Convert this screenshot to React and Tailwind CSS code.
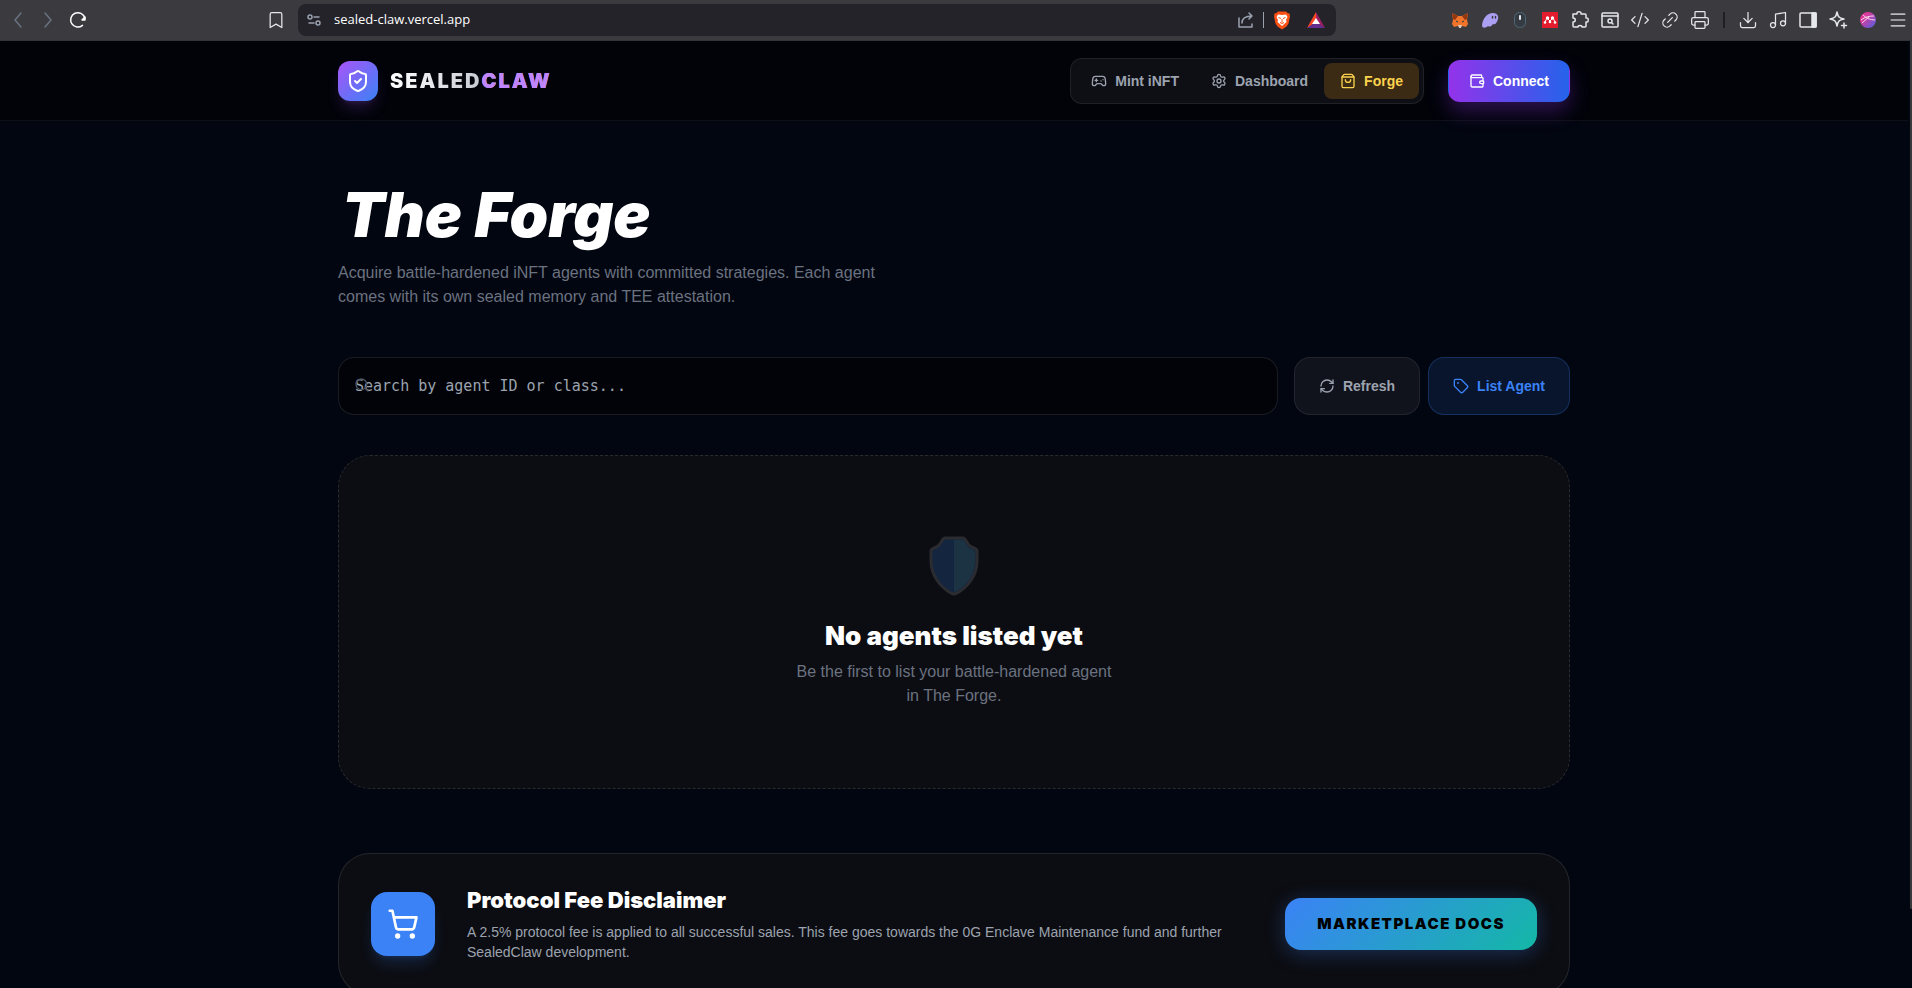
import React, { useState } from "react";
import {
  ShieldCheck,
  Gamepad2,
  Settings,
  ShoppingBag,
  Wallet,
  RefreshCw,
  Tag,
  Search,
  ShoppingCart,
  Bookmark,
  Link2,
  CodeXml,
  Printer,
  Download,
  Music,
  Menu,
} from "lucide-react";

export default function App() {
  const [query, setQuery] = useState("");

  return (
    <div className="h-screen flex flex-col overflow-hidden bg-[#020610] font-['Liberation_Sans',Arial,sans-serif]">
      <BrowserBar />

      <div className="flex flex-1 min-h-0">
        <div className="flex-1 overflow-y-auto [scrollbar-width:none]">
          <Header />

          <main className="max-w-7xl mx-auto px-6 pt-16 pb-10">
            {/* ================= TITLE ================= */}
            <h1 className="px-1 text-[62px] leading-[60px] font-black italic text-white mb-4 font-['Inter',sans-serif]">
              The Forge
            </h1>
            <p className="max-w-xl text-base text-[#6b7280] mb-12">
              Acquire battle-hardened iNFT agents with committed strategies. Each agent comes with its own sealed memory and TEE attestation.
            </p>

            {/* ================= SEARCH ================= */}
            <div className="flex gap-4 mb-10">
              <div className="relative flex-1">
                <Search size={16} className="absolute left-4 top-5 text-[#4b5563]" />
                <input
                  aria-label="Search agents"
                  value={query}
                  onChange={(e) => setQuery(e.target.value)}
                  placeholder="Search by agent ID or class..."
                  className="w-full h-[58px] px-4 rounded-2xl bg-black/50 border border-white/10 text-[15px] text-white placeholder:text-[#9ca3af] font-['DejaVu_Sans_Mono',monospace] outline-none"
                />
              </div>
              <div className="flex gap-2">
                <button className="flex items-center gap-2 px-6 rounded-2xl bg-[#10131c] border border-white/8 text-sm font-bold text-[#9ca3af]">
                  <RefreshCw size={16} /> Refresh
                </button>
                <button className="flex items-center gap-2 px-6 rounded-2xl bg-[#3b82f6]/12 border border-[#3b82f6]/25 text-sm font-bold text-[#3b82f6]">
                  <Tag size={16} /> List Agent
                </button>
              </div>
            </div>

            {/* ================= EMPTY STATE ================= */}
            <section className="flex flex-col items-center py-20 mb-16 rounded-[32px] bg-[#0c0d12] border border-dashed border-white/12 text-center">
              <ShieldArt />
              <h2 className="text-[26px] leading-8 font-black text-white mb-2 font-['Inter',sans-serif]">No agents listed yet</h2>
              <p className="max-w-xs text-base text-[#6b7280]">
                Be the first to list your battle-hardened agent in The Forge.
              </p>
            </section>

            {/* ================= DISCLAIMER ================= */}
            <section className="flex items-center gap-8 p-8 rounded-[32px] bg-[#0c0d12] border border-white/10">
              <div className="w-16 h-16 shrink-0 rounded-2xl bg-[#3b82f6] text-white flex items-center justify-center shadow-lg shadow-[#3b82f6]/20">
                <ShoppingCart size={32} />
              </div>
              <div className="flex-1">
                <h3 className="text-[22px] leading-7 font-black text-white mb-2 font-['Inter',sans-serif]">Protocol Fee Disclaimer</h3>
                <p className="max-w-3xl text-sm text-[#9ca3af]">
                  A 2.5% protocol fee is applied to all successful sales. This fee goes towards the 0G Enclave Maintenance fund and further SealedClaw development.
                </p>
              </div>
              <button className="px-8 h-13 rounded-2xl bg-linear-135/srgb from-[#3b82f6] to-[#14b8a6] text-[15px] font-black tracking-widest text-black shadow-[0_4px_20px] shadow-[#3b82f6]/30 font-['Inter',sans-serif]">
                MARKETPLACE DOCS
              </button>
            </section>
          </main>
        </div>

        {/* scrollbar */}
        <div className="w-1 pl-0.5">
          <div className="h-11/12 rounded-b bg-[#3a3a3c]" />
        </div>
      </div>
    </div>
  );
}

/* ================= BROWSER BAR ================= */

const BrowserBar = () => (
  <div className="h-[41px] shrink-0 flex items-center bg-[#3b3a3f] border-b border-[#343338] text-gray-200">
    <div className="w-[298px] flex items-center gap-[10px] pl-2">
      <button aria-label="Back" className="text-gray-500"><BackIcon /></button>
      <button aria-label="Forward" className="text-gray-500"><ForwardIcon /></button>
      <button aria-label="Reload"><ReloadIcon /></button>
      <button aria-label="Bookmark" className="ml-auto mr-3"><Bookmark size={20} strokeWidth={1.5} /></button>
    </div>

    <div className="w-[1038px] h-8 flex items-center gap-3 px-2 rounded-lg bg-[#242329]">
      <button aria-label="Site settings" className="text-gray-400"><TuneIcon /></button>
      <span className="flex-1 text-[13px] text-white font-['Open_Sans',sans-serif]">sealed-claw.vercel.app</span>
      <div className="flex items-center gap-2 mr-0.5">
        <button aria-label="Share" className="text-gray-400"><ShareIcon /></button>
        <span className="w-px h-4 bg-gray-400" />
        <button aria-label="Shields"><LionIcon /></button>
      </div>
      <button aria-label="Rewards" className="mr-0.5"><TriangleIcon /></button>
    </div>

    <div className="flex-1 flex items-center justify-end gap-[10px] pr-1">
      <button aria-label="Fox wallet"><FoxIcon /></button>
      <button aria-label="Ghost wallet"><GhostIcon /></button>
      <button aria-label="Mouse"><MouseIcon /></button>
      <button aria-label="Reference manager"><RedIcon /></button>
      <button aria-label="Extensions"><PuzzleIcon /></button>
      <button aria-label="Page search"><PageSearchIcon /></button>
      <button aria-label="Source"><CodeXml size={20} strokeWidth={1.5} /></button>
      <button aria-label="Copy link"><Link2 size={20} strokeWidth={1.5} className="-rotate-45" /></button>
      <button aria-label="Print"><Printer size={20} strokeWidth={1.5} /></button>
      <span className="w-0.5 h-4 mx-[3px] bg-[#1f1e23]" />
      <button aria-label="Downloads"><Download size={20} strokeWidth={1.5} /></button>
      <button aria-label="Media"><Music size={20} strokeWidth={1.5} /></button>
      <button aria-label="Sidebar"><SidebarIcon /></button>
      <button aria-label="Assistant"><SparkIcon /></button>
      <button aria-label="Account"><AvatarIcon /></button>
      <button aria-label="Menu" className="text-[#b9b9bd]"><Menu size={20} strokeWidth={2} /></button>
    </div>
  </div>
);

/* ================= HEADER ================= */

const Header = () => (
  <header className="h-20 bg-[#010309] border-b border-white/5">
    <div className="max-w-7xl mx-auto px-6 h-full flex items-center justify-between">
      <a href="#" className="flex items-center gap-3">
        <span className="w-10 h-10 rounded-xl bg-linear-to-br/srgb from-[#a855f7] to-[#3b82f6] text-white flex items-center justify-center shadow-lg shadow-[#a855f7]/20">
          <ShieldCheck size={24} />
        </span>
        <span className="text-xl font-black tracking-widest bg-linear-to-r/srgb from-white to-[#9ca3af] bg-clip-text text-transparent font-['Inter',sans-serif]">
          SEALED<span className="text-[#c084fc]">CLAW</span>
        </span>
      </a>

      <div className="flex items-center gap-6">
        <nav className="flex items-center p-1 rounded-xl bg-[#0e0f15] border border-white/8 text-sm font-bold text-[#9ca3af]">
          <a href="#" className="flex items-center gap-2 px-4 py-2"><Gamepad2 size={16} /> Mint iNFT</a>
          <a href="#" className="flex items-center gap-2 px-4 py-2"><Settings size={16} /> Dashboard</a>
          <a href="#" className="flex items-center gap-2 px-4 py-2 rounded-lg bg-[#3b2a14] text-[#fcd34d]"><ShoppingBag size={16} /> Forge</a>
        </nav>
        <button className="flex items-center gap-2 px-5 h-[42px] rounded-xl border border-transparent bg-linear-to-r/srgb from-[#9333ea] to-[#2563eb] text-sm font-bold text-white shadow-[0_10px_20px] shadow-[#9333ea]/30">
          <Wallet size={16} /> Connect
        </button>
      </div>
    </div>
  </header>
);

/* ================= ICONS ================= */

const line = { fill: "none", stroke: "currentColor", strokeWidth: 1.5, strokeLinecap: "round", strokeLinejoin: "round" };

const BackIcon = () => (
  <svg width="20" height="20" viewBox="0 0 20 20" {...line}>
    <path d="M13 3l-6 7 6 7" />
  </svg>
);

const ForwardIcon = () => (
  <svg width="20" height="20" viewBox="0 0 20 20" {...line}>
    <path d="M7 3l6 7-6 7" />
  </svg>
);

const ReloadIcon = () => (
  <svg width="20" height="20" viewBox="0 0 20 20" {...line} stroke="#fff">
    <path d="M14.500 15.400A7.200 7.200 0 1 1 16.800 8" />
    <path d="M17 7v3h-3z" fill="#fff" />
  </svg>
);

const TuneIcon = () => (
  <svg width="16" height="16" viewBox="0 0 16 16" {...line}>
    <circle cx="4" cy="5" r="2" />
    <path d="M8 5h5M3 11h5" />
    <circle cx="12" cy="11" r="2" />
  </svg>
);

const ShareIcon = () => (
  <svg width="18" height="18" viewBox="0 0 18 18" {...line}>
    <path d="M2 7v9h13v-3" />
    <path d="M5 12c0-5 4-7 10-7M12 2l3 3-3 3" />
  </svg>
);

const LionIcon = () => (
  <svg width="20" height="20" viewBox="0 0 20 20">
    <path d="M6 1.500h8l1.500 1.500 2 .5.5 3-1.500 7-2 3-4.500 3-4.500-3-2-3L2 6.500l.5-3 2-.5z" fill="#fb4f14" />
    <path d="M6 4.500l4 .5 4-.5 1.500 2.500-1.500 3 .5 2-4.500 4-4.500-4 .5-2-1.500-3z" fill="#fff" />
    <path d="M6.500 7.500l2.500 1M13.500 7.500l-2.500 1M10 9v3.500M8 12.500l2 1 2-1" stroke="#fb4f14" strokeWidth="1" fill="none" />
  </svg>
);

const TriangleIcon = () => (
  <svg width="20" height="20" viewBox="0 0 20 20">
    <path d="M10 2L1 18l6-4 3-5z" fill="#ff4724" />
    <path d="M10 2l9 16-6-4-3-5z" fill="#9e1f63" />
    <path d="M1 18h18l-6-4H7z" fill="#662d91" />
    <path d="M10 8l4 6H6z" fill="#fff" />
  </svg>
);

const FoxIcon = () => (
  <svg width="20" height="20" viewBox="0 0 20 20">
    <path d="M2 3l6 3h4l6-3-1 7 1 4-2 3-4-1-2 1-2-1-4 1-2-3 1-4z" fill="#f0752a" />
    <path d="M2 3l6 3-3 4-2-1zM18 3l-6 3 3 4 2-1z" fill="#93370f" />
    <path d="M8 15h4l-1 3H9z" fill="#d8c6b8" />
    <path d="M6 11l2 1M14 11l-2 1" stroke="#233447" strokeWidth="1" />
  </svg>
);

const GhostIcon = () => (
  <svg width="20" height="20" viewBox="0 0 20 20">
    <path d="M2 15c1-7 5-12 11-12 4 0 6 3 5 6-1 4-3 6-5 5-2 3-4 3-5 2-2 2-6 3-6-1z" fill="#ab9ff2" />
    <path d="M12.500 6.500v1.500M15.500 6.500v1.500" stroke="#3b3a3f" strokeWidth="1.5" strokeLinecap="round" />
  </svg>
);

const MouseIcon = () => (
  <svg width="20" height="20" viewBox="0 0 20 20">
    <rect x="4.500" y="2.500" width="11" height="15" rx="5" fill="#343b42" stroke="#4f6a78" />
    <rect x="9" y="5" width="2" height="5" rx="1" fill="#e5e7eb" />
  </svg>
);

const RedIcon = () => (
  <svg width="20" height="20" viewBox="0 0 20 20">
    <rect x="2" y="2" width="16" height="16" fill="#e31b2c" />
    <circle cx="7.500" cy="8" r="1.700" fill="#fff" />
    <circle cx="12.500" cy="8" r="1.700" fill="#fff" />
    <circle cx="5" cy="12.500" r="1.300" fill="#fff" />
    <circle cx="10" cy="12" r="1.300" fill="#fff" />
    <circle cx="15" cy="12.500" r="1.300" fill="#fff" />
    <path d="M5 12l2-4 3 3 3-3 2 4" fill="none" stroke="#fff" strokeWidth="1" />
  </svg>
);

const PuzzleIcon = () => (
  <svg width="20" height="20" viewBox="0 0 20 20" {...line}>
    <path d="M3 4h4c-1-3 5-3 4 0h4a1 1 0 0 1 1 1v3c3-1 3 5 0 4v4a1 1 0 0 1-1 1h-3c0-2-4-2-4 0H4a1 1 0 0 1-1-1v-4c3 0 3-4 0-4z" />
  </svg>
);

const PageSearchIcon = () => (
  <svg width="20" height="20" viewBox="0 0 20 20" {...line}>
    <rect x="2" y="3" width="16" height="14" rx="1" />
    <path d="M2 6h16M12 13l1 1" />
    <circle cx="10" cy="11" r="2" />
  </svg>
);

const SidebarIcon = () => (
  <svg width="20" height="20" viewBox="0 0 20 20" {...line}>
    <rect x="2" y="3" width="16" height="14" rx="1" />
    <path d="M14 3h4v14h-4z" fill="currentColor" />
  </svg>
);

const SparkIcon = () => (
  <svg width="20" height="20" viewBox="0 0 20 20" {...line}>
    <path d="M9 2c1 5 2 6 7 7-5 1-6 2-7 7-1-5-2-6-7-7 5-1 6-2 7-7z" />
    <path d="M16 13v5M13.500 15.500h5" />
  </svg>
);

const AvatarIcon = () => (
  <svg width="20" height="20" viewBox="0 0 20 20">
    <defs>
      <linearGradient id="avatar" x1="0" y1="0" x2="1" y2="1">
        <stop offset="0.3" stopColor="#d93a9c" />
        <stop offset="1" stopColor="#4a63e8" />
      </linearGradient>
    </defs>
    <circle cx="10" cy="10" r="8" fill="url(#avatar)" />
    <path d="M3 10c4-3 8-4 13-4M5 5c3 3 7 5 12 5M4 13l8-7" stroke="#fbd5ea" strokeWidth="1" fill="none" />
  </svg>
);

const ShieldArt = () => (
  <svg width="50" height="60" viewBox="0 0 50 60" className="mb-6">
    <path d="M16 2h18c3 0 3 5 7 8 2 2 7 2 7 5v10c0 14-9 26-20 32q-3 2-6 0C11 51 2 39 2 25V15c0-3 5-3 7-5 4-3 4-8 7-8z" fill="#14253f" stroke="#2b2c31" strokeWidth="3" />
    <path d="M25 4h9c2 1 3 5 6 8 2 1 6 2 6 4v9c0 13-8 25-20 31h-1z" fill="#1b3343" />
  </svg>
);
